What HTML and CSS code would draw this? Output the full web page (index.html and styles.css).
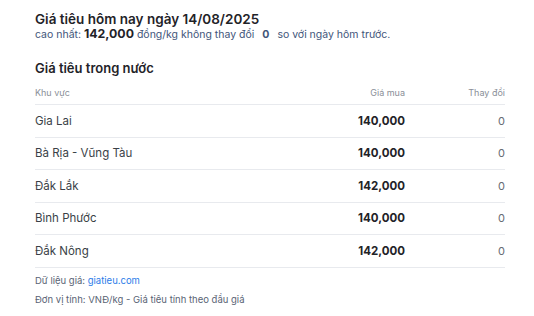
FILE: index.html
```html
<!DOCTYPE html>
<html lang="vi">
<head>
<meta charset="utf-8">
<link rel="stylesheet" href="styles.css">
</head>
<body>
<div class="wrap">
  <h1 class="title">Giá tiêu hôm nay ngày 14/08/2025</h1>
  <p class="sub">cao nhất: <b class="big">142,000</b> đồng/kg không thay đổi <b class="zero">0</b> so với ngày hôm trước.</p>
  <h2 class="section">Giá tiêu trong nước</h2>
  <table class="tbl">
    <thead>
      <tr><th class="c1">Khu vực</th><th class="c2">Giá mua</th><th class="c3">Thay đổi</th></tr>
    </thead>
    <tbody>
      <tr><td class="c1">Gia Lai</td><td class="c2">140,000</td><td class="c3">0</td></tr>
      <tr><td class="c1">Bà Rịa - Vũng Tàu</td><td class="c2">140,000</td><td class="c3">0</td></tr>
      <tr><td class="c1">Đắk Lắk</td><td class="c2">142,000</td><td class="c3">0</td></tr>
      <tr><td class="c1">Bình Phước</td><td class="c2">140,000</td><td class="c3">0</td></tr>
      <tr><td class="c1">Đắk Nông</td><td class="c2">142,000</td><td class="c3">0</td></tr>
    </tbody>
  </table>
  <p class="note first">Dữ liệu giá: <a class="link" href="#">giatieu.com</a></p>
  <p class="note">Đơn vị tính: VNĐ/kg - Giá tiêu tính theo đầu giá</p>
</div>
</body>
</html>
```
FILE: styles.css
```css
html, body { margin: 0; padding: 0; background: #fff; }
body { font-family: Inter, "Noto Sans", sans-serif; color: #222; }
.wrap { padding: 10px 29px 0 35px; }
.title { margin: 0; font-size: 13.5px; font-weight: 600; line-height: 18px; color: #1f2328; }
.sub { margin: 0; font-size: 10.5px; line-height: 14px; color: #42557a; }
.sub .big { font-size: 12.3px; font-weight: 700; color: #1f2328; line-height: 10px; }
.sub .zero { font-weight: 700; margin: 0 5px; }
.section { margin: 17px 0 0; font-size: 13px; font-weight: 600; line-height: 18px; color: #1f2328; }
.tbl { width: 470px; border-collapse: collapse; margin-top: 4px; }
.tbl th { font-size: 9px; font-weight: 400; color: #8a8f98; height: 23px; padding: 0; border-bottom: 1px solid #e8eaee; }
.tbl td { height: 31.5px; padding: 0; font-size: 11.5px; color: #3a3f47; border-bottom: 1px solid #e8eaee; }
.tbl .c1 { text-align: left; }
.tbl .c2 { text-align: right; }
.tbl .c3 { text-align: right; width: 100px; }
.tbl td.c2 { font-size: 11.5px; font-weight: 700; color: #1f2328; }
.tbl td.c3 { font-size: 11px; color: #666b73; }
.note { margin: 0; font-size: 9.5px; line-height: 19px; color: #5a6475; }
.note.first { margin-top: 3px; }
.link { color: #2b7de9; text-decoration: none; }
```
